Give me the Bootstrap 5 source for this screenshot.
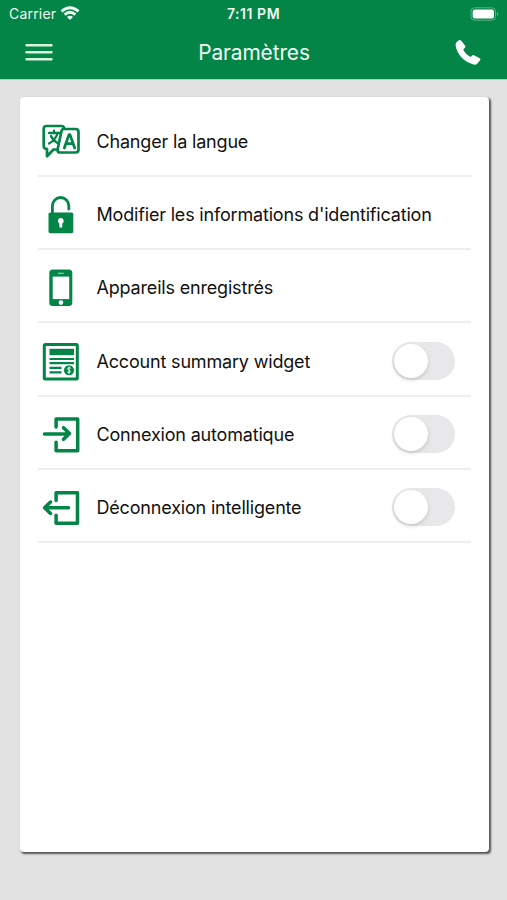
<!DOCTYPE html>
<html lang="fr">
<head>
<meta charset="utf-8">
<meta name="viewport" content="width=device-width, initial-scale=1">
<title>Paramètres</title>
<link href="https://cdn.jsdelivr.net/npm/bootstrap@5.3.0/dist/css/bootstrap.min.css" rel="stylesheet">
<style>
:root { --brand: #028547; }
body { background: #e2e2e2; font-family: Inter, "Liberation Sans", sans-serif; color: #111; }
.app-header { background: var(--brand); height: 80px; color: #f2fbf3; border-bottom: 1px solid #a9d3bb; }
.status-bar { height: 27px; padding: 0 7px 0 9px; font-size: 14px; line-height: 27px; }
.status-side { flex: 1 1 0; }
.carrier-name { letter-spacing: .2px; }
.status-time { font-weight: 600; font-size: 14px; letter-spacing: .55px; margin-right: 2px; }
.title-bar { height: 51px; padding: 0 26px 0 25px; }
.page-title { font-size: 20.9px; letter-spacing: -.1px; font-weight: 400; }
.settings-panel { height: 754.5px; margin: 17px 18.5px 0 19.5px; padding: 6.6px 18px 0; border: 0; border-radius: 4px; box-shadow: 1.5px 1.5px 2px 0 #555; }
.settings-panel .setting-row { height: 73.3px; padding: 3px 16px 0 3px; border: 0; border-bottom: 2px solid #eee; border-radius: 0; background: none; color: #111; }
.setting-icon { width: 40px; height: 40px; margin-right: 16px; color: var(--brand); flex: none; }
.setting-label { font-size: 18px; letter-spacing: -.18px; white-space: nowrap; padding-top: 1px; }
.setting-toggle.form-check-input { width: 63px; height: 38px; border: 0; border-radius: 19px; background: #e8e8ea; position: relative; box-shadow: none; }
.setting-toggle::after { content: ""; display: block; width: 34px; height: 34px; margin: 2px; border-radius: 50%; background: #fff; box-shadow: 0 2px 4px rgba(0,0,0,.15); }
</style>
<script src="https://cdn.jsdelivr.net/npm/bootstrap@5.3.0/dist/js/bootstrap.bundle.min.js"></script>
</head>
<body class="min-vh-100">
<header class="app-header">
  <div class="status-bar d-flex align-items-center">
    <div class="status-side d-flex align-items-center">
      <span class="carrier-name">Carrier</span>
      <svg class="ms-1" width="20" height="15" viewBox="0 0 20 15" fill="none" stroke="currentColor" stroke-width="2.900"><path d="M1.500 5.400Q10-2 18.500 5.400M4.600 8.600Q10 4 15.400 8.600"/><path d="M7 10.900Q10 8.400 13 10.900L10 14z" fill="currentColor" stroke="none"/></svg>
    </div>
    <span class="status-time">7:11 PM</span>
    <div class="status-side d-flex justify-content-end">
      <svg width="30" height="14" viewBox="0 0 30 14"><rect x="1" y=".8" width="24.500" height="12.400" rx="3.500" fill="none" stroke="#5db183"/><rect x="2.700" y="2.500" width="21.300" height="9" rx="2" fill="#fff"/><path d="M27 5q2 2 0 4z" fill="#7fc29d"/></svg>
    </div>
  </div>
  <nav class="title-bar d-flex align-items-center justify-content-between">
    <svg width="28" height="20" viewBox="0 0 28 20" stroke="#d9f7df" stroke-width="2.400" stroke-linecap="round"><path d="M1.500 2.200h25M1.500 9.200h25M1.500 16.200h25"/></svg>
    <h1 class="page-title m-0">Paramètres</h1>
    <svg width="26" height="26" viewBox="0 .7 26 26" fill="#fff"><path d="M3.400 1.300Q5 .1 6.300 1.500L10 6.300Q10.800 7.600 9.700 8.800L8.200 10.200Q10.500 15 15.600 17.800L17.200 16.300Q18.300 15.400 19.500 16.100L24.700 18.900Q26 19.900 24.900 21.300L22.200 24.400Q20.900 25.700 18.600 25.200C9 22.600 2.200 15.200.8 7.200Q.2 4.200 1.500 2.900z"/></svg>
  </nav>
</header>
<main class="card settings-panel">
  <div class="list-group rounded-0">
    <div class="list-group-item setting-row d-flex align-items-center">
      <svg class="setting-icon" viewBox="0 0 40 40" fill="none" stroke="currentColor" stroke-width="2.700" stroke-linejoin="round" stroke-linecap="round"><path d="M23 8V6.500Q22.500 5 20.500 5H5.500Q2.700 5 2.700 7.800V25Q2.700 27.800 6 28V35.300L12.500 28.500H17"/><path d="M22.500 8H34.500Q37.500 8 37.500 11V28.500Q37.500 31.500 34.500 31.500H19.200Q16 31.500 16.600 28.500L20.500 10Q21 8 22.500 8z"/><path d="M8 12H18.500M13 9.700V12M16.500 12.500Q14.500 19 8 22.500M10 15Q12 19.500 16.500 22" stroke-width="2.300"/><path d="M23.300 27L28 13.600H29L33.700 27M25 22.700H32" stroke-width="2.700"/></svg>
      <span class="setting-label">Changer la langue</span>
    </div>
    <div class="list-group-item setting-row d-flex align-items-center">
      <svg class="setting-icon" viewBox="0 0 40 40"><path d="M11.400 20V11.700A8.200 8.200 0 0 1 27.800 11.700V15" fill="none" stroke="currentColor" stroke-width="2.800" stroke-linecap="round"/><rect x="7.500" y="18.500" width="24.800" height="20.800" rx="1.800" fill="currentColor"/><path d="M19.800 24a3 3 0 0 1 1.400 5.600V33.500h-2.800V29.600A3 3 0 0 1 19.800 24z" fill="#fff"/></svg>
      <span class="setting-label">Modifier les informations d'identification</span>
    </div>
    <div class="list-group-item setting-row d-flex align-items-center">
      <svg class="setting-icon" viewBox="0 0 40 40"><rect x="8.300" y="2.400" width="23" height="36.700" rx="3.500" fill="currentColor"/><path d="M11.700 9.600h16.500v22.500H11.700z" fill="#fff"/><path d="M17.300 6.300h5" stroke="#b9ddca" stroke-width="1.100" stroke-linecap="round"/><circle cx="19.900" cy="35.600" r="2.300" fill="#fff"/></svg>
      <span class="setting-label">Appareils enregistrés</span>
    </div>
    <div class="list-group-item setting-row d-flex align-items-center">
      <svg class="setting-icon" viewBox="0 0 40 40"><rect x="3.300" y="3.500" width="33" height="34.400" rx="1" fill="none" stroke="currentColor" stroke-width="3"/><path d="M8.500 7.800H33v6.400H8.500z" fill="currentColor"/><path d="M8.500 18H33M8.500 22.200H33M8.500 26.800H20.500M8.500 31.300H20.500" stroke="currentColor" stroke-width="2.200"/><circle cx="28" cy="29.300" r="5.500" fill="currentColor" stroke="#fff" stroke-width="1"/><path d="M29.800 27.300Q28 26 26.800 27.200C25.800 29.200 30.200 29 29.200 31.200Q28 32.300 26.200 31.100M28 25.500V33" fill="none" stroke="#fff" stroke-width=".9"/></svg>
      <span class="setting-label">Account summary widget</span>
      <input class="form-check-input setting-toggle ms-auto mt-0" type="checkbox" role="switch" aria-label="Account summary widget">
    </div>
    <div class="list-group-item setting-row d-flex align-items-center">
      <svg class="setting-icon" viewBox="0 0 40 40" fill="none" stroke="currentColor" stroke-width="3.500" stroke-linejoin="round" stroke-linecap="round"><path d="M15.100 13V4.900H36.700V36.800H15.100V28.200"/><path d="M3.500 20H28M22.500 13.700L28.500 19.600L22.500 25.300"/></svg>
      <span class="setting-label">Connexion automatique</span>
      <input class="form-check-input setting-toggle ms-auto mt-0" type="checkbox" role="switch" aria-label="Connexion automatique">
    </div>
    <div class="list-group-item setting-row d-flex align-items-center">
      <svg class="setting-icon" viewBox="0 0 40 40" fill="none" stroke="currentColor" stroke-width="3.500" stroke-linejoin="round" stroke-linecap="round"><path d="M15.100 13.500V5.700H36.500V36.200H15.100V28.200"/><path d="M27.500 20.700H4M9.500 15L3.600 20.700L9.500 26.500"/></svg>
      <span class="setting-label">Déconnexion intelligente</span>
      <input class="form-check-input setting-toggle ms-auto mt-0" type="checkbox" role="switch" aria-label="Déconnexion intelligente">
    </div>
  </div>
</main>
</body>
</html>
